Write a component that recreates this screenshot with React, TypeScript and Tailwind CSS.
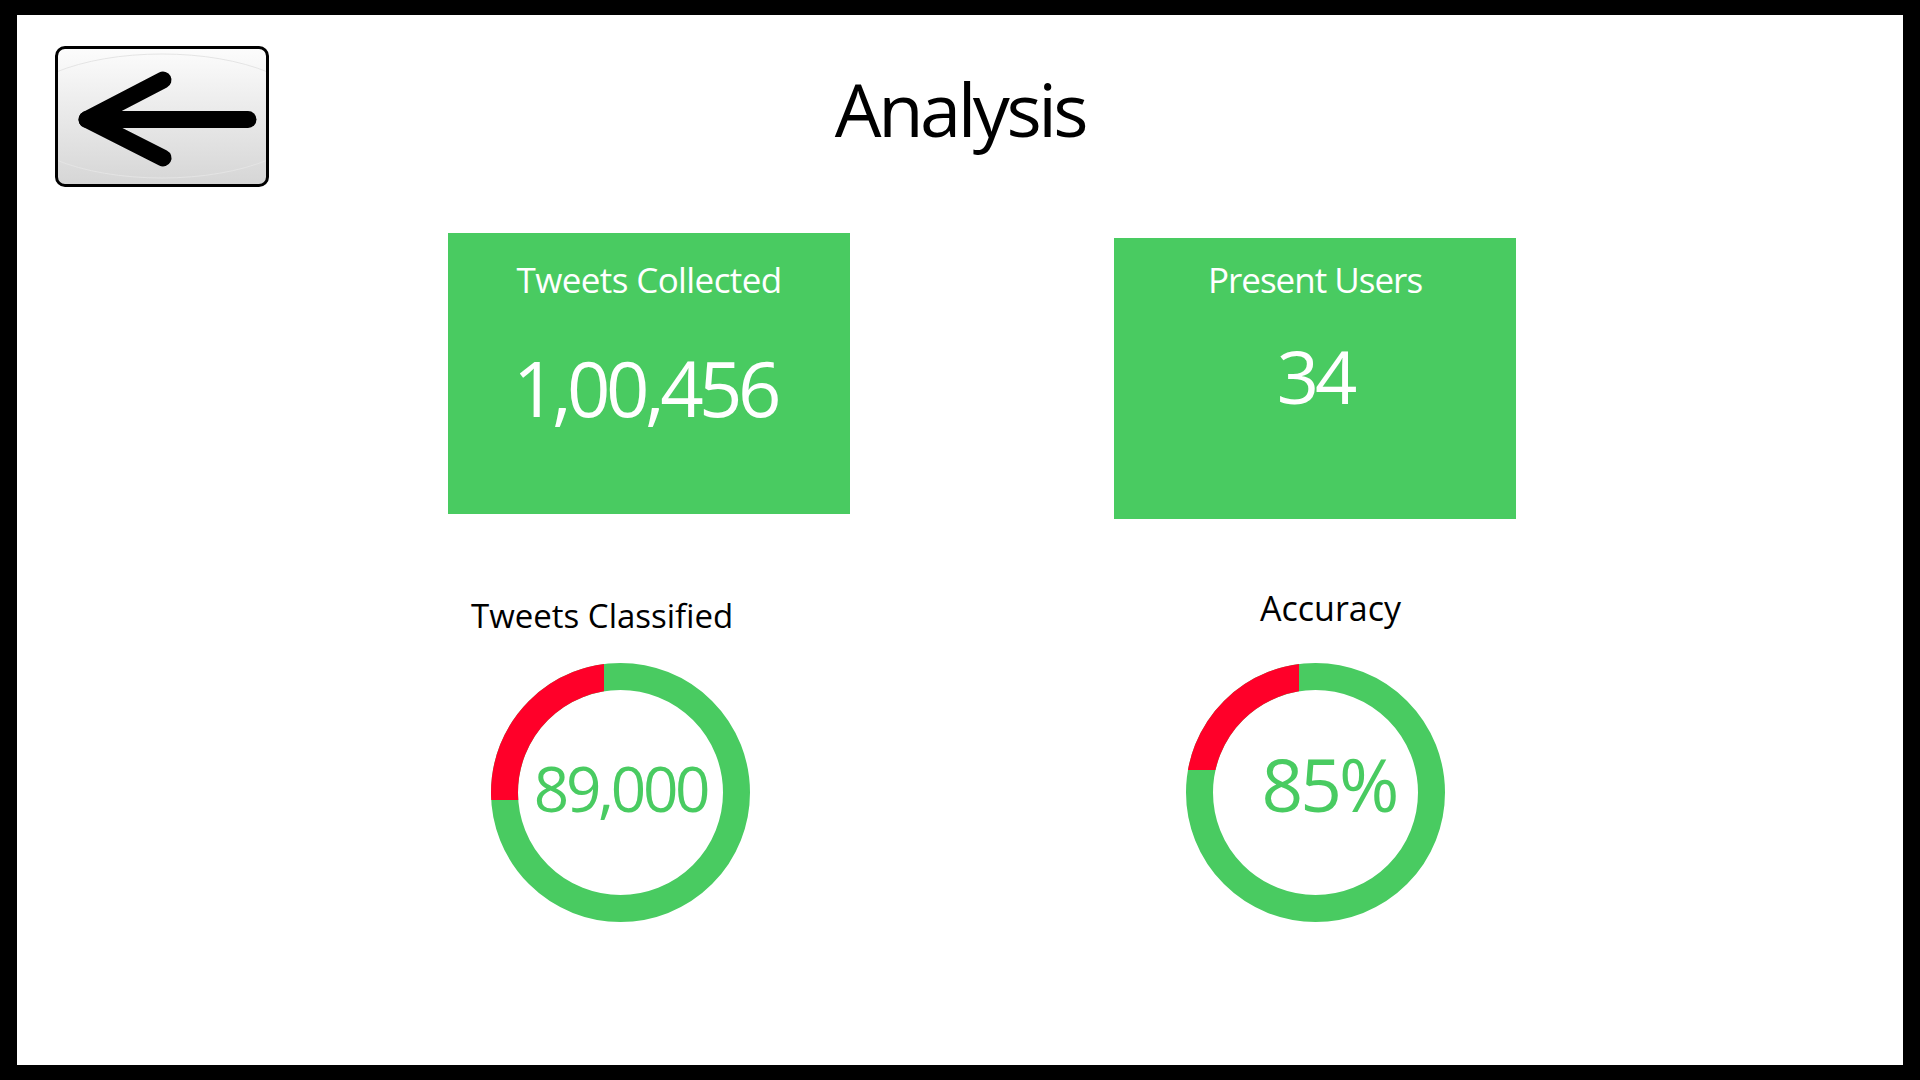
import React from 'react'

const FONT = { fontFamily: '"Open Sans", "Noto Sans", sans-serif' }

// Ring chart drawn as a green circle with a red arc clipped to the upper-left corner
const Donut: React.FC<{ id: string; clipW: number; clipH: number; value: string; textClass: string }> = ({
  id,
  clipW,
  clipH,
  value,
  textClass,
}) => (
  <div className="relative w-[259px] h-[259px]">
    <svg className="block" width="259" height="259" viewBox="0 0 259 259">
      <defs>
        <clipPath id={id}>
          <rect x="0" y="0" width={clipW} height={clipH} />
        </clipPath>
      </defs>
      <circle cx="129.5" cy="129.5" r="116" fill="none" stroke="#49cb61" strokeWidth="27" />
      <circle
        cx="129.5"
        cy="129.5"
        r="116"
        fill="none"
        stroke="#ff0029"
        strokeWidth="27"
        clipPath={`url(#${id})`}
      />
    </svg>
    <div className={`absolute inset-0 flex items-center justify-center text-[#49cb61] ${textClass}`}>
      {value}
    </div>
  </div>
)

const BackButton: React.FC = () => (
  <button className="relative block w-[214px] h-[141px] border-[3px] border-black rounded-[10px] bg-gradient-to-b from-[#fcfcfc] to-[#d6d6d6] overflow-hidden">
    <svg className="absolute left-0 top-0" width="208" height="135" viewBox="0 0 208 135">
      <ellipse cx="104" cy="67" rx="150" ry="62" fill="none" stroke="#e4e4e4" strokeWidth="1" />
      <g stroke="#000" strokeWidth="17" strokeLinecap="round" strokeLinejoin="round" fill="none">
        <path d="M105 31 L29 70.5 L105 109" />
        <path d="M29 70.5 L190 70.5" />
      </g>
    </svg>
  </button>
)

const App: React.FC = () => {
  return (
    <div className="w-[1920px] h-[1080px] bg-black pt-[15px] pl-[17px]" style={FONT}>
      <div className="w-[1886px] h-[1050px] bg-white">
        {/* Header */}
        <div className="grid grid-cols-[1fr_auto_1fr] items-start pt-[31px]">
          <div className="pl-[38px]">
            <BackButton />
          </div>
          <h1 className="mt-[26px] text-[74px] leading-[74px] tracking-[-3.5px] text-black font-normal">Analysis</h1>
          <div />
        </div>

        {/* Stat cards */}
        <div className="flex items-start mt-[46px]">
          <div className="ml-[431px] w-[402px] h-[281px] bg-[#49cb61] flex flex-col items-center text-white pt-[29px]">
            <div className="text-[35px] leading-[35px] tracking-[-0.6px]">Tweets Collected</div>
            <div className="mt-[53px] text-[76px] leading-[76px] tracking-[-4.5px] pr-[8px]">1,00,456</div>
          </div>
          <div className="ml-[264px] mt-[5px] w-[402px] h-[281px] bg-[#49cb61] flex flex-col items-center text-white pt-[24px]">
            <div className="text-[35px] leading-[35px] tracking-[-1px]">Present Users</div>
            <div className="mt-[42px] text-[74px] leading-[74px] tracking-[-4px]">34</div>
          </div>
        </div>

        {/* Ring charts */}
        <div className="flex items-start">
          <div className="ml-[431px] w-[402px] flex flex-col">
            <div className="ml-[23px] mt-[77px] text-[33px] leading-[40px] text-black">Tweets Classified</div>
            <div className="ml-[43px] mt-[27px]">
              <Donut
                id="clip-classified"
                clipW={113}
                clipH={137}
                value="89,000"
                textClass="text-[62px] leading-[62px] tracking-[-3.3px] pb-[9px]"
              />
            </div>
          </div>
          <div className="ml-[264px] w-[402px] flex flex-col">
            <div className="ml-[146px] mt-[69px] text-[34px] leading-[40px] text-black">Accuracy</div>
            <div className="ml-[72px] mt-[35px]">
              <Donut
                id="clip-accuracy"
                clipW={113}
                clipH={107}
                value="85%"
                textClass="text-[73px] leading-[73px] tracking-[-3px] pb-[18px] pl-[27px]"
              />
            </div>
          </div>
        </div>
      </div>
    </div>
  )
}

export default App
